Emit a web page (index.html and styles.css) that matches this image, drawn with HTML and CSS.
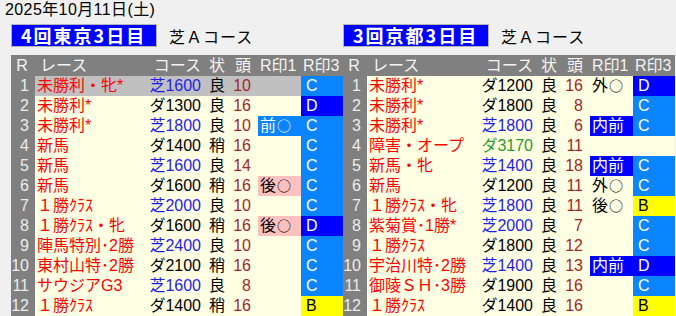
FILE: index.html
```html
<!DOCTYPE html>
<html lang="ja">
<head>
<meta charset="utf-8">
<title>開催</title>
<link rel="stylesheet" href="styles.css">
</head>
<body>
<div class="page">
  <div class="date">2025年10月11日(土)</div>
  <div class="meets">
    <section class="meet">
      <div class="meet-head"><span class="label">4回東京3日目</span><span class="turf">芝Ａコース</span></div>
      <table class="races">
        <colgroup><col class="c-r"><col class="c-name"><col class="c-course"><col class="c-cond"><col class="c-num"><col class="c-m1"><col class="c-m3"></colgroup>
        <thead><tr><th class="r">R</th><th class="name">レース</th><th class="course">コース</th><th class="cond">状</th><th class="num">頭</th><th class="m">R印1</th><th class="m">R印3</th></tr></thead>
        <tbody>
          <tr class="sel"><td class="r">1</td><td class="name">未勝利・牝*</td><td class="course turfc">芝1600</td><td class="cond">良</td><td class="num">10</td><td class="m"></td><td class="m lb">C</td></tr>
          <tr><td class="r">2</td><td class="name">未勝利*</td><td class="course">ダ1300</td><td class="cond">良</td><td class="num">16</td><td class="m"></td><td class="m db">D</td></tr>
          <tr><td class="r">3</td><td class="name">未勝利*</td><td class="course turfc">芝1800</td><td class="cond">良</td><td class="num">10</td><td class="m lb">前<span class="ci">○</span></td><td class="m lb">C</td></tr>
          <tr><td class="r">4</td><td class="name">新馬</td><td class="course">ダ1400</td><td class="cond">稍</td><td class="num">16</td><td class="m"></td><td class="m lb">C</td></tr>
          <tr><td class="r">5</td><td class="name">新馬</td><td class="course turfc">芝1600</td><td class="cond">良</td><td class="num">14</td><td class="m"></td><td class="m lb">C</td></tr>
          <tr><td class="r">6</td><td class="name">新馬</td><td class="course">ダ1600</td><td class="cond">稍</td><td class="num">16</td><td class="m pk">後<span class="ci">○</span></td><td class="m lb">C</td></tr>
          <tr><td class="r">7</td><td class="name">１勝ｸﾗｽ</td><td class="course turfc">芝2000</td><td class="cond">良</td><td class="num">10</td><td class="m"></td><td class="m lb">C</td></tr>
          <tr><td class="r">8</td><td class="name">１勝ｸﾗｽ・牝</td><td class="course">ダ1600</td><td class="cond">稍</td><td class="num">16</td><td class="m pk">後<span class="ci">○</span></td><td class="m db">D</td></tr>
          <tr><td class="r">9</td><td class="name">陣馬特別･2勝</td><td class="course turfc">芝2400</td><td class="cond">良</td><td class="num">10</td><td class="m"></td><td class="m lb">C</td></tr>
          <tr><td class="r">10</td><td class="name">東村山特･2勝</td><td class="course">ダ2100</td><td class="cond">稍</td><td class="num">16</td><td class="m"></td><td class="m lb">C</td></tr>
          <tr><td class="r">11</td><td class="name">サウジアG3</td><td class="course turfc">芝1600</td><td class="cond">良</td><td class="num">8</td><td class="m"></td><td class="m lb">C</td></tr>
          <tr><td class="r">12</td><td class="name">１勝ｸﾗｽ</td><td class="course">ダ1400</td><td class="cond">稍</td><td class="num">16</td><td class="m"></td><td class="m yb">B</td></tr>
        </tbody>
      </table>
    </section>
    <section class="meet">
      <div class="meet-head"><span class="label">3回京都3日目</span><span class="turf">芝Ａコース</span></div>
      <table class="races">
        <colgroup><col class="c-r"><col class="c-name"><col class="c-course"><col class="c-cond"><col class="c-num"><col class="c-m1"><col class="c-m3"></colgroup>
        <thead><tr><th class="r">R</th><th class="name">レース</th><th class="course">コース</th><th class="cond">状</th><th class="num">頭</th><th class="m">R印1</th><th class="m">R印3</th></tr></thead>
        <tbody>
          <tr><td class="r">1</td><td class="name">未勝利*</td><td class="course">ダ1200</td><td class="cond">良</td><td class="num">16</td><td class="m">外<span class="ci">○</span></td><td class="m db">D</td></tr>
          <tr><td class="r">2</td><td class="name">未勝利*</td><td class="course">ダ1800</td><td class="cond">良</td><td class="num">8</td><td class="m"></td><td class="m lb">C</td></tr>
          <tr><td class="r">3</td><td class="name">未勝利*</td><td class="course turfc">芝1800</td><td class="cond">良</td><td class="num">6</td><td class="m db">内前</td><td class="m lb">C</td></tr>
          <tr><td class="r">4</td><td class="name">障害・オープ</td><td class="course jump">ダ3170</td><td class="cond">良</td><td class="num">11</td><td class="m"></td><td class="m"></td></tr>
          <tr><td class="r">5</td><td class="name">新馬・牝</td><td class="course turfc">芝1400</td><td class="cond">良</td><td class="num">18</td><td class="m db">内前</td><td class="m lb">C</td></tr>
          <tr><td class="r">6</td><td class="name">新馬</td><td class="course">ダ1200</td><td class="cond">良</td><td class="num">11</td><td class="m">外<span class="ci">○</span></td><td class="m lb">C</td></tr>
          <tr><td class="r">7</td><td class="name">１勝ｸﾗｽ・牝</td><td class="course turfc">芝1800</td><td class="cond">良</td><td class="num">11</td><td class="m">後<span class="ci">○</span></td><td class="m yb">B</td></tr>
          <tr><td class="r">8</td><td class="name">紫菊賞･1勝*</td><td class="course turfc">芝2000</td><td class="cond">良</td><td class="num">7</td><td class="m"></td><td class="m lb">C</td></tr>
          <tr><td class="r">9</td><td class="name">１勝ｸﾗｽ</td><td class="course">ダ1800</td><td class="cond">良</td><td class="num">12</td><td class="m"></td><td class="m lb">C</td></tr>
          <tr><td class="r">10</td><td class="name">宇治川特･2勝</td><td class="course turfc">芝1400</td><td class="cond">良</td><td class="num">13</td><td class="m db">内前</td><td class="m db">D</td></tr>
          <tr><td class="r">11</td><td class="name">御陵ＳＨ･3勝</td><td class="course">ダ1900</td><td class="cond">良</td><td class="num">16</td><td class="m"></td><td class="m lb">C</td></tr>
          <tr><td class="r">12</td><td class="name">１勝ｸﾗｽ</td><td class="course">ダ1400</td><td class="cond">良</td><td class="num">16</td><td class="m"></td><td class="m yb">B</td></tr>
        </tbody>
      </table>
    </section>
  </div>
</div>
</body>
</html>
```

FILE: styles.css
```css
html, body {
  margin: 0;
  padding: 0;
  background: #f0f0f0;
  overflow: hidden;
}
body {
  font-family: "Liberation Sans", "Noto Sans CJK JP", sans-serif;
  font-size: 16px;
  color: #000;
}
.page {
  width: 676px;
  height: 316px;
  overflow: hidden;
}
.date {
  padding: 0 0 0 5px;
  height: 22px;
  line-height: 20px;
  font-size: 16px;
  letter-spacing: 0.4px;
}
.meets {
  display: flex;
  padding-left: 11px;
  padding-top: 2px;
}
.meet {
  width: 332px;
  flex: 0 0 332px;
}
.meet-head {
  display: flex;
  align-items: center;
  gap: 12px;
  height: 23px;
  margin-bottom: 8px;
}
.label {
  box-sizing: border-box;
  width: 146px;
  height: 23px;
  background: #0000ff;
  color: #fff;
  font-family: "Noto Sans CJK JP", sans-serif;
  font-size: 18px;
  font-weight: bold;
  line-height: 21px;
  letter-spacing: 2px;
  padding-left: 9px;
  border: 1px solid #b4b4b4;
  white-space: nowrap;
}
.turf {
  font-family: "Noto Sans CJK JP", sans-serif;
  font-size: 16px;
  line-height: 20px;
  letter-spacing: 1px;
}
.races {
  width: 332px;
  table-layout: fixed;
  border-collapse: collapse;
  border-spacing: 0;
}
.c-r { width: 24px; }
.c-name { width: 113px; }
.c-course { width: 55px; }
.c-cond { width: 28px; }
.c-num { width: 27px; }
.c-m1 { width: 43px; }
.c-m3 { width: 42px; }
.races th, .races td {
  padding: 0;
  height: 20px;
  line-height: 20px;
  white-space: nowrap;
  font-weight: normal;
  text-align: left;
}
.races thead th {
  background: #808080;
  color: #f4f4f4;
  height: 21px;
}
.races tbody td {
  background: #ffffe4;
}
.races .r {
  text-align: right;
  padding-right: 6px;
}
.races tbody td.r {
  background: #808080;
  color: #ececec;
}
.races th.r {
  text-align: center;
  padding-right: 2px;
}
.races .name {
  padding-left: 2px;
}
.races th.name {
  padding-left: 5px;
}
.races tbody td.name {
  color: #ff0000;
}
.races .course {
  text-align: right;
  padding-right: 2px;
}
.races .cond {
  text-align: center;
}
.races .num {
  text-align: right;
  padding-right: 7px;
}
.races tbody td.num {
  color: #a02828;
}
.races .m {
  padding-left: 2px;
}
.races tbody td.m + td.m {
  padding-left: 5px;
}
.races th.m + th.m {
  padding-left: 2px;
}
.ci {
  font-family: "Noto Sans CJK JP", sans-serif;
  font-size: 14px;
  line-height: 14px;
  margin-left: 1px;
  vertical-align: baseline;
}
.races tbody td.turfc { color: #1e1ee8; }
.races tbody td.jump { color: #2a9a2a; }
.races tbody tr.sel td:not(.r):not(:last-child) { background: #c0c0c0; }
.races tbody td.lb { background: #0a84ff; color: #fff; }
.races tbody td.db { background: #0000ff; color: #fff; }
.races tbody td.yb { background: #ffff00; color: #000; }
.races tbody td.pk { background: #ffc0c0; color: #000; }
```
